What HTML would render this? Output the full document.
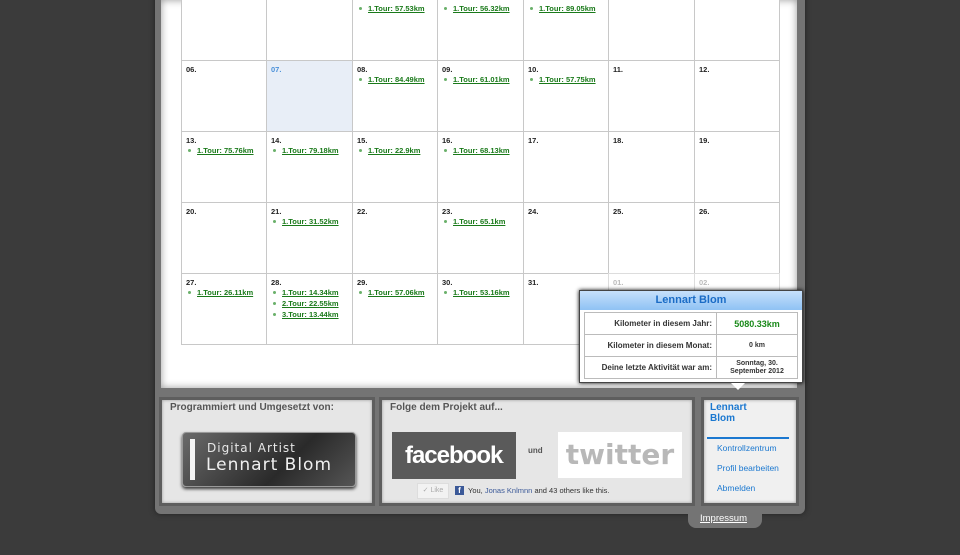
<!DOCTYPE html>
<html><head><meta charset="utf-8"><style>
*{margin:0;padding:0;box-sizing:border-box}
body{width:960px;height:555px;background:#3b3b3b;position:relative;overflow:hidden;font-family:"Liberation Sans",Arial,sans-serif}
.frame{position:absolute;left:155px;top:-10px;width:650px;height:524px;background:#747474;border-radius:0 0 6px 6px;box-shadow:0 0 6px #222}
.panel{position:absolute;left:161px;top:0;width:636px;height:388px;background:#fff;box-shadow:inset 0 0 8px #999}
.c{position:absolute;width:87px;height:72px;border:1px solid #c8c8c8;background:#fff;font-size:7.5px;color:#222;font-weight:bold;padding:4px 4px}
.c.h{background:#e8eef7}.c.h b{color:#4a90d9}
.c.g{color:#bbb;border-color:#ddd}
.c b{display:block;height:10px}
.c i{display:block;font-style:normal;color:#1a7a1a;text-decoration:underline;height:11px;padding-left:11px;position:relative}
.c i:before{content:"";position:absolute;left:2px;top:3px;width:3px;height:3px;border-radius:50%;background:#6ab06a}
.box{position:absolute;top:397px;height:109px;background:#e6e6e6;border:3px solid #5e5e5e;box-shadow:inset 0 0 3px #999}
.box h3{font-size:10px;color:#555;font-weight:bold;padding:2px 8px}
.tip{position:absolute;left:579px;top:290px;width:224px;height:93px;background:#fff;border:1px solid #444;box-shadow:0 0 4px #000}
.tip .hd{height:19px;background:linear-gradient(#c6e0fb,#8fc2f4);color:#1b6cc6;font-weight:bold;font-size:11px;text-align:center;line-height:19px}
.tip table{border-collapse:collapse;margin:2px 4px;width:214px;font-size:8px;font-weight:bold;color:#333}
.tip td{border:1px solid #bbb;height:22px}
.tip td.l{text-align:right;padding-right:4px;width:132px}
.tip td.r{text-align:center;font-size:7px}
</style></head><body>
<div class="frame"></div>
<div class="panel"></div>

<div class="c" style="left:181px;top:-11px"></div>
<div class="c" style="left:266px;top:-11px"></div>
<div class="c" style="left:352px;top:-11px"><b></b><i>1.Tour: 57.53km</i></div>
<div class="c" style="left:437px;top:-11px"><b></b><i>1.Tour: 56.32km</i></div>
<div class="c" style="left:523px;top:-11px"><b></b><i>1.Tour: 89.05km</i></div>
<div class="c" style="left:608px;top:-11px"></div>
<div class="c" style="left:694px;top:-11px;width:86px"></div>

<div class="c" style="left:181px;top:60px"><b>06.</b></div>
<div class="c h" style="left:266px;top:60px"><b>07.</b></div>
<div class="c" style="left:352px;top:60px"><b>08.</b><i>1.Tour: 84.49km</i></div>
<div class="c" style="left:437px;top:60px"><b>09.</b><i>1.Tour: 61.01km</i></div>
<div class="c" style="left:523px;top:60px"><b>10.</b><i>1.Tour: 57.75km</i></div>
<div class="c" style="left:608px;top:60px"><b>11.</b></div>
<div class="c" style="left:694px;top:60px;width:86px"><b>12.</b></div>

<div class="c" style="left:181px;top:131px"><b>13.</b><i>1.Tour: 75.76km</i></div>
<div class="c" style="left:266px;top:131px"><b>14.</b><i>1.Tour: 79.18km</i></div>
<div class="c" style="left:352px;top:131px"><b>15.</b><i>1.Tour: 22.9km</i></div>
<div class="c" style="left:437px;top:131px"><b>16.</b><i>1.Tour: 68.13km</i></div>
<div class="c" style="left:523px;top:131px"><b>17.</b></div>
<div class="c" style="left:608px;top:131px"><b>18.</b></div>
<div class="c" style="left:694px;top:131px;width:86px"><b>19.</b></div>

<div class="c" style="left:181px;top:202px"><b>20.</b></div>
<div class="c" style="left:266px;top:202px"><b>21.</b><i>1.Tour: 31.52km</i></div>
<div class="c" style="left:352px;top:202px"><b>22.</b></div>
<div class="c" style="left:437px;top:202px"><b>23.</b><i>1.Tour: 65.1km</i></div>
<div class="c" style="left:523px;top:202px"><b>24.</b></div>
<div class="c" style="left:608px;top:202px"><b>25.</b></div>
<div class="c" style="left:694px;top:202px;width:86px"><b>26.</b></div>

<div class="c" style="left:181px;top:273px"><b>27.</b><i>1.Tour: 26.11km</i></div>
<div class="c" style="left:266px;top:273px"><b>28.</b><i>1.Tour: 14.34km</i><i>2.Tour: 22.55km</i><i>3.Tour: 13.44km</i></div>
<div class="c" style="left:352px;top:273px"><b>29.</b><i>1.Tour: 57.06km</i></div>
<div class="c" style="left:437px;top:273px"><b>30.</b><i>1.Tour: 53.16km</i></div>
<div class="c" style="left:523px;top:273px"><b>31.</b></div>
<div class="c g" style="left:608px;top:273px"><b>01.</b></div>
<div class="c g" style="left:694px;top:273px;width:86px"><b>02.</b></div>

<div class="box" style="left:159px;width:216px">
<h3>Programmiert und Umgesetzt von:</h3>
<div style="position:absolute;left:20px;top:32px;width:174px;height:55px;border-radius:4px;background:linear-gradient(135deg,#6a6a6a,#2a2a2a 60%,#555);box-shadow:0 2px 3px #333;border:1px solid #999">
<div style="position:absolute;left:7px;top:6px;width:5px;height:41px;background:#f4f4f4"></div>
<div style="position:absolute;left:24px;top:8px;color:#e8e8e8;font-size:12px;letter-spacing:1px;font-family:'DejaVu Sans',sans-serif">Digital Artist</div>
<div style="position:absolute;left:23px;top:22px;color:#f0f0f0;font-size:17px;letter-spacing:1px;font-family:'DejaVu Sans',sans-serif">Lennart Blom</div>
</div></div>

<div class="box" style="left:379px;width:316px">
<h3>Folge dem Projekt auf...</h3>
<div style="position:absolute;left:10px;top:32px;width:124px;height:47px;background:#5a5a5a;color:#fff;font-weight:bold;font-size:24px;text-align:center;line-height:47px;letter-spacing:-1px">facebook<span style="font-size:6px">.</span></div>
<div style="position:absolute;left:146px;top:46px;font-size:8px;color:#555;font-weight:bold">und</div>
<div style="position:absolute;left:176px;top:32px;width:124px;height:46px;background:#fff;color:#b8b8b8;font-weight:bold;font-size:28px;text-align:center;line-height:46px;font-family:'DejaVu Sans',sans-serif">twitter</div>
<div style="position:absolute;left:35px;top:83px;width:32px;height:16px;background:#f2f2f2;border:1px solid #ddd;font-size:7px;color:#aaa;line-height:14px;text-align:center">✓ Like</div>
<div style="position:absolute;left:73px;top:86px;width:9px;height:9px;background:#3b5998;color:#fff;font-size:8px;font-weight:bold;text-align:center;line-height:10px">f</div>
<div style="position:absolute;left:86px;top:86px;font-size:7.5px;color:#333">You, <span style="color:#3b5998">Jonas Knlmnn</span> and 43 others like this.</div>
</div>

<div class="box" style="left:701px;width:98px;background:#f0f0f0">
<div style="position:absolute;left:6px;top:2px;font-size:10px;font-weight:bold;color:#1b78d0;line-height:11px">Lennart<br>Blom</div>
<div style="position:absolute;left:3px;top:37px;width:82px;height:2px;background:#1b78d0"></div>
<div style="position:absolute;left:13px;top:38px;font-size:8.5px;color:#1b78d0;line-height:20px">Kontrollzentrum<br>Profil bearbeiten<br>Abmelden</div>
</div>

<div style="position:absolute;left:688px;top:510px;width:74px;height:18px;background:#747474;border-radius:0 0 8px 8px"></div>
<div style="position:absolute;left:700px;top:513px;font-size:9.5px;color:#fff;text-decoration:underline">Impressum</div>

<div class="tip">
<div class="hd">Lennart Blom</div>
<table>
<tr><td class="l">Kilometer in diesem Jahr:</td><td class="r" style="color:#1a8a1a;font-size:9px">5080.33km</td></tr>
<tr><td class="l">Kilometer in diesem Monat:</td><td class="r">0 km</td></tr>
<tr><td class="l">Deine letzte Aktivität war am:</td><td class="r" style="line-height:8px">Sonntag, 30.<br>September 2012</td></tr>
</table>
</div>
<div style="position:absolute;left:731px;top:383px;width:0;height:0;border-left:7px solid transparent;border-right:7px solid transparent;border-top:7px solid #fff"></div>
</body></html>
